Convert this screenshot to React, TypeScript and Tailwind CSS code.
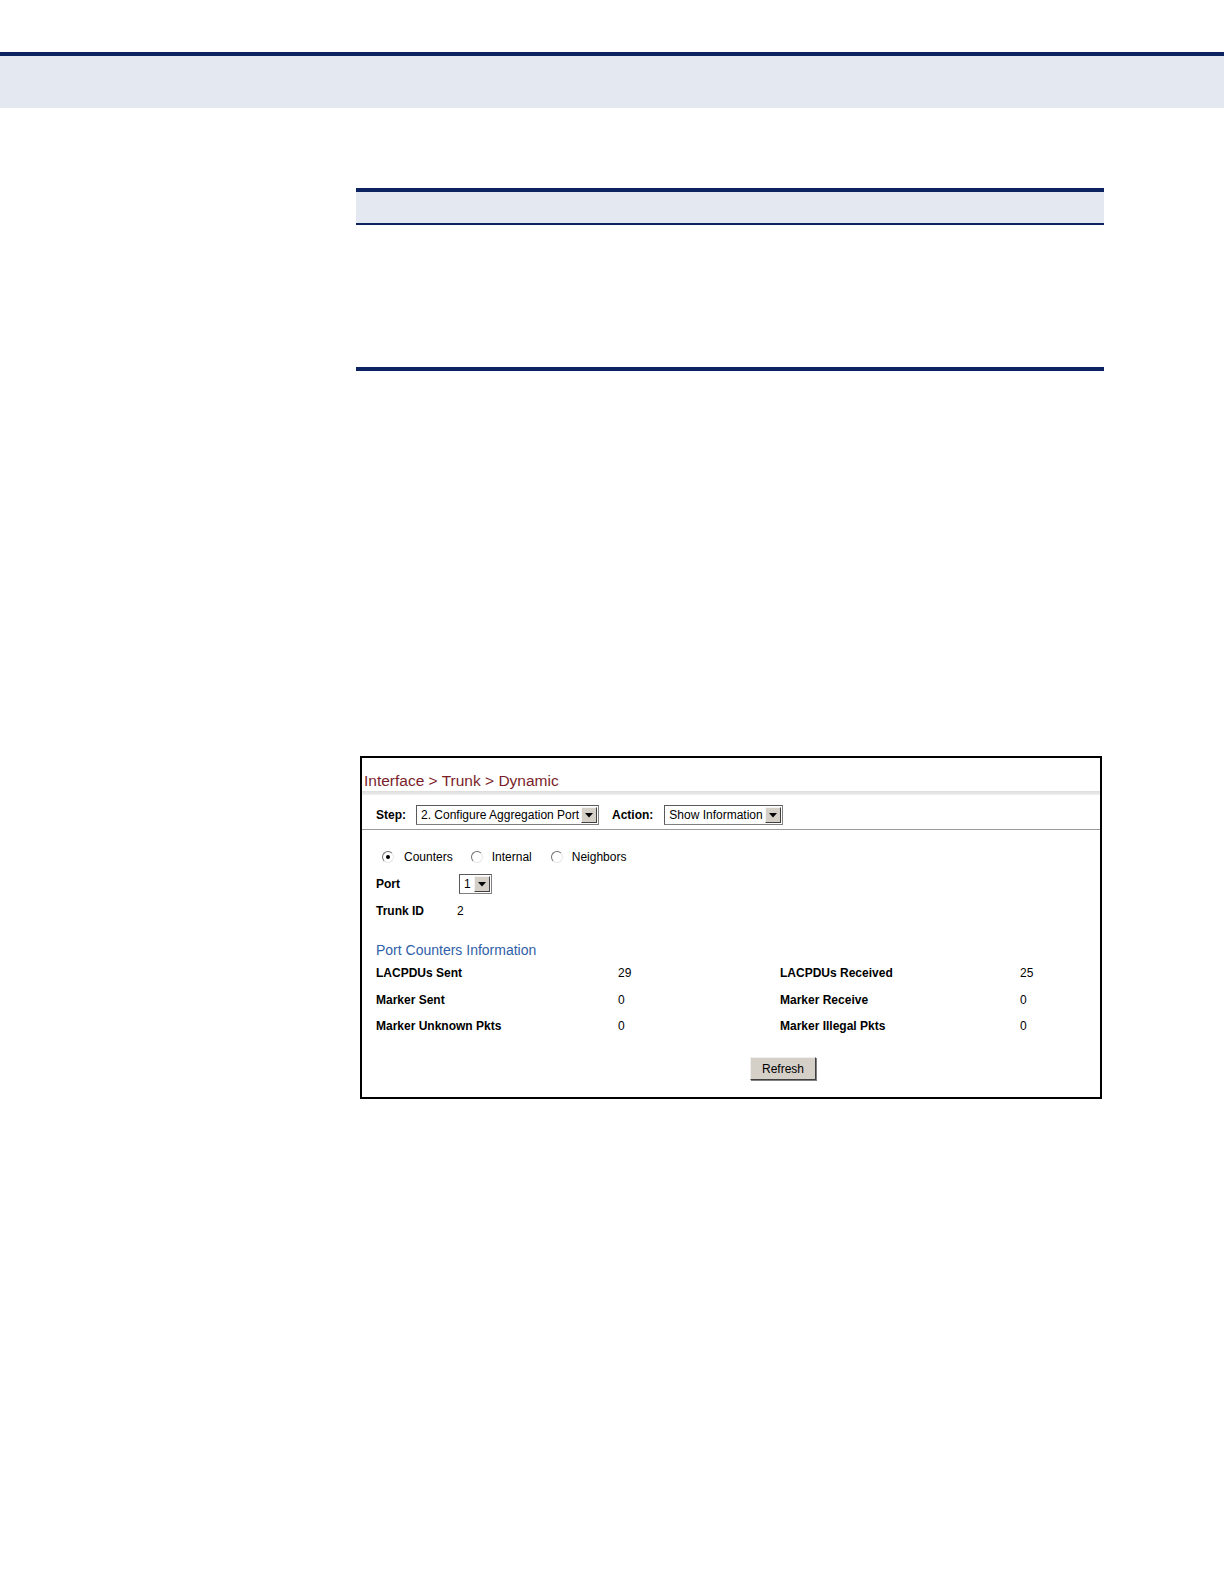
import React from 'react';

const navy = 'bg-[#0b2461]';

// small windows-style dropdown arrow
const DropArrow = () => (
  <div className="w-[16px] h-[16px] bg-[#d4d0c8] border border-t-[#f4f4f4] border-l-[#f4f4f4] border-r-[#404040] border-b-[#404040] flex items-center justify-center">
    <svg width="8" height="5" viewBox="0 0 8 5">
      <path d="M0 0 L8 0 L4 4.5 Z" fill="#000" />
    </svg>
  </div>
);

const Select = ({ value, width }: { value: string; width: string }) => (
  <div className={`${width} h-[20px] flex items-center justify-between border border-[#7f7f7f] border-t-[#5a5a5a] border-l-[#5a5a5a] bg-white pl-[4px] pr-[1px]`}>
    <span className="text-[12px] leading-none text-black whitespace-nowrap">{value}</span>
    <DropArrow />
  </div>
);

const Radio = ({ checked }: { checked?: boolean }) => (
  <div className="w-[12px] h-[12px] rounded-full border border-t-[#6e6e6e] border-l-[#6e6e6e] border-r-[#e8e8e8] border-b-[#e8e8e8] bg-white flex items-center justify-center">
    {checked && <div className="w-[4px] h-[4px] rounded-full bg-black" />}
  </div>
);

const counters = [
  ['LACPDUs Sent', '29', 'LACPDUs Received', '25'],
  ['Marker Sent', '0', 'Marker Receive', '0'],
  ['Marker Unknown Pkts', '0', 'Marker Illegal Pkts', '0'],
];

export default function App() {
  return (
    <div className="w-[1224px] h-[1584px] bg-white pt-[52px]" style={{ fontFamily: '"Liberation Sans", Arial, sans-serif' }}>
      {/* page header band */}
      <div className={`h-[4px] ${navy}`} />
      <div className="h-[52px] bg-[#e4e8f0]" />

      {/* empty table block */}
      <div className="ml-[356px] w-[748px] mt-[80px]">
        <div className={`h-[4px] ${navy}`} />
        <div className="h-[33px] bg-[#e4e8f0] border-b-2 border-[#0b2461]" />
        <div className="h-[142px]" />
        <div className={`h-[4px] ${navy}`} />
      </div>

      {/* web UI screenshot */}
      <div className="ml-[360px] mt-[385px] w-[742px] h-[343px] border-2 border-black text-black">
        <div className="h-[33px] pl-[2px] pt-[11px]">
          <span className="text-[15.5px] leading-[18px] text-[#7a1e2a]">Interface &gt; Trunk &gt; Dynamic</span>
        </div>
        <div className="h-[4px] bg-gradient-to-b from-[#dcdcdc] to-[#f0f0f0]" />
        <div className="h-[35px] flex items-start pt-[10px] pl-[14px] border-b border-[#9a9a9a]">
          <span className="h-[20px] leading-[20px] text-[12px] font-bold mr-[10px]">Step:</span>
          <Select value="2. Configure Aggregation Port" width="w-[183px]" />
          <span className="h-[20px] leading-[20px] text-[12px] font-bold ml-[13px] mr-[11px]">Action:</span>
          <Select value="Show Information" width="w-[119px]" />
        </div>

        <div className="pl-[14px]">
          <div className="h-[26px] mt-[14px] flex items-center text-[12px]">
            <div className="ml-[6px]"><Radio checked /></div>
            <span className="ml-[10px]">Counters</span>
            <div className="ml-[18px]"><Radio /></div>
            <span className="ml-[9px]">Internal</span>
            <div className="ml-[19px]"><Radio /></div>
            <span className="ml-[9px]">Neighbors</span>
          </div>
          <div className="h-[28px] flex items-center">
            <span className="w-[83px] text-[12px] font-bold">Port</span>
            <Select value="1" width="w-[33px]" />
          </div>
          <div className="h-[26px] flex items-center text-[12px]">
            <span className="w-[81px] font-bold">Trunk ID</span>
            <span>2</span>
          </div>
          <div className="h-[36px] pt-[14px]">
            <span className="text-[14px] leading-[18px] text-[#2f5fa8]">Port Counters Information</span>
          </div>
          {counters.map(([a, b, c, d]) => (
            <div key={a} className="h-[26.5px] flex items-center text-[12px]">
              <span className="w-[242px] font-bold">{a}</span>
              <span className="w-[162px]">{b}</span>
              <span className="w-[240px] font-bold">{c}</span>
              <span>{d}</span>
            </div>
          ))}
          <div className="mt-[16px] ml-[374px]">
            <button className="w-[66px] h-[23px] bg-[#d4d0c8] border border-t-[#f0f0f0] border-l-[#f0f0f0] border-r-[#404040] border-b-[#404040] text-[12px] text-black shadow-[1px_1px_0_#808080]">
              Refresh
            </button>
          </div>
        </div>
      </div>
    </div>
  );
}
